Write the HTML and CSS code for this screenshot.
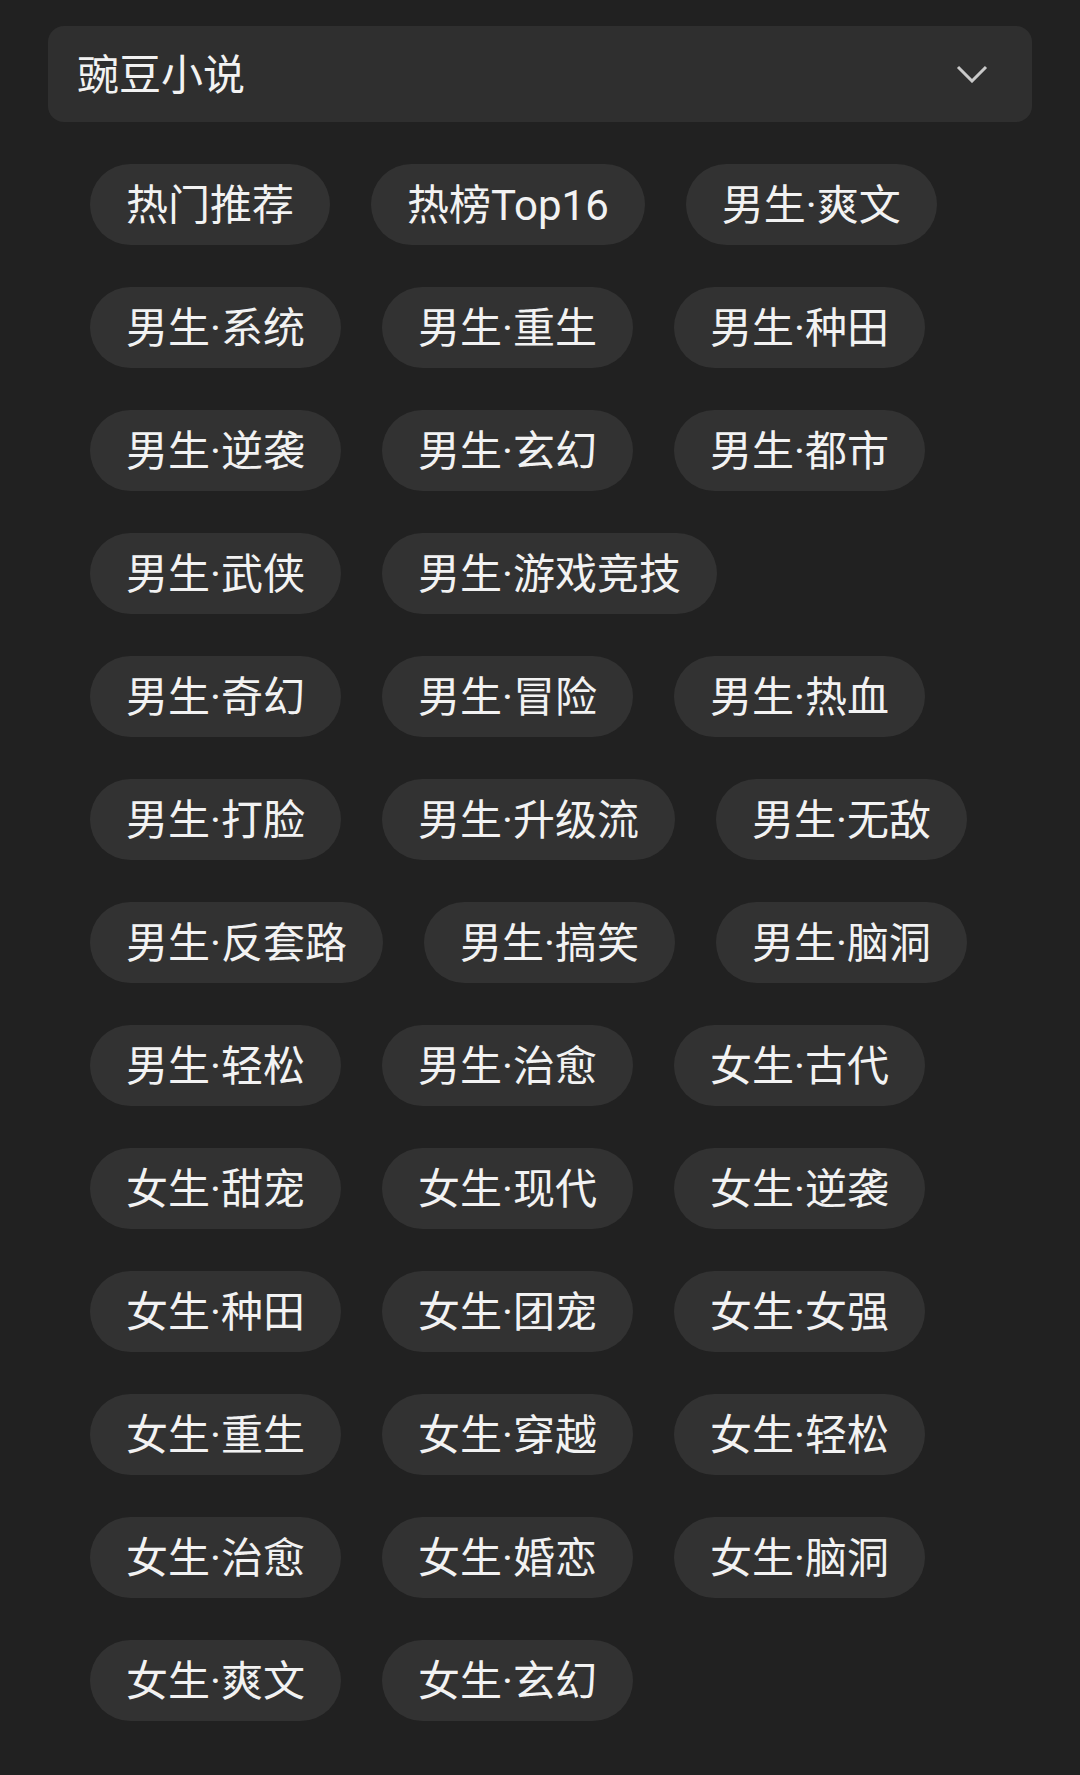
FILE: index.html
```html
<!DOCTYPE html>
<html lang="zh-CN">
<head>
  <meta charset="UTF-8">
  <title>豌豆小说</title>
  <meta name="viewport" content="width=device-width, initial-scale=1.0">
  <link rel="stylesheet" href="styles.css">
</head>
<body>

  <div class="page">

    <!-- Source picker -->
    <div class="picker">
      <span class="picker-title">豌豆小说</span>
      <svg class="chevron" width="32" height="18" viewBox="0 0 32 18">
        <polyline points="2,2 16,16 30,2" fill="none" stroke="#c9c9c9" stroke-width="3"/>
      </svg>
    </div>

    <!-- Categories -->
    <div class="tags">
      <span class="tag">热门推荐</span>
      <span class="tag">热榜Top16</span>
      <span class="tag">男生·爽文</span>
      <span class="tag">男生·系统</span>
      <span class="tag">男生·重生</span>
      <span class="tag">男生·种田</span>
      <span class="tag">男生·逆袭</span>
      <span class="tag">男生·玄幻</span>
      <span class="tag">男生·都市</span>
      <span class="tag">男生·武侠</span>
      <span class="tag">男生·游戏竞技</span>
      <span class="tag">男生·奇幻</span>
      <span class="tag">男生·冒险</span>
      <span class="tag">男生·热血</span>
      <span class="tag">男生·打脸</span>
      <span class="tag">男生·升级流</span>
      <span class="tag">男生·无敌</span>
      <span class="tag">男生·反套路</span>
      <span class="tag">男生·搞笑</span>
      <span class="tag">男生·脑洞</span>
      <span class="tag">男生·轻松</span>
      <span class="tag">男生·治愈</span>
      <span class="tag">女生·古代</span>
      <span class="tag">女生·甜宠</span>
      <span class="tag">女生·现代</span>
      <span class="tag">女生·逆袭</span>
      <span class="tag">女生·种田</span>
      <span class="tag">女生·团宠</span>
      <span class="tag">女生·女强</span>
      <span class="tag">女生·重生</span>
      <span class="tag">女生·穿越</span>
      <span class="tag">女生·轻松</span>
      <span class="tag">女生·治愈</span>
      <span class="tag">女生·婚恋</span>
      <span class="tag">女生·脑洞</span>
      <span class="tag">女生·爽文</span>
      <span class="tag">女生·玄幻</span>
    </div>

  </div>

</body>
</html>
```

FILE: styles.css
```css
html, body {
  margin: 0;
  background: #212121;
}

body {
  font-family: Roboto, "Noto Sans CJK SC", sans-serif;
  color: #f2f2f2;
}

.page {
  padding: 26px 48px;
}

.picker {
  display: flex;
  align-items: center;
  justify-content: space-between;
  height: 96px;
  padding: 0 44px 0 29px;
  background: #2f2f2f;
  border-radius: 16px;
}

.picker-title {
  font-size: 42px;
  line-height: 1;
  padding-top: 4px;
}

.chevron {
  display: block;
}

.tags {
  display: flex;
  flex-wrap: wrap;
  gap: 42px 41px;
  margin-top: 42px;
  padding: 0 42px;
}

.tag {
  display: flex;
  align-items: center;
  box-sizing: border-box;
  height: 81px;
  padding: 3px 36px 0;
  background: #323232;
  border-radius: 41px;
  font-size: 42px;
  line-height: 1;
  white-space: nowrap;
}
```
